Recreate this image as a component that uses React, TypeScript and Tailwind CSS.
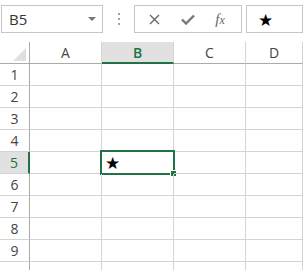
import React from "react";

const cols = ["A", "B", "C", "D"];
const rows = [1, 2, 3, 4, 5, 6, 7, 8, 9, 10];
const activeCol = "B";
const activeRow = 5;

const FormulaBar: React.FC = () => {
  return (
    <div className="flex h-[42px] items-start pl-[1px] pt-[5px]">
      {/* name box */}
      <div className="flex h-[28px] w-[102px] items-center justify-between border border-[#c6c6c6] pl-[7px] pr-[6px]">
        <span className="text-[15px] text-[#333]">B5</span>
        <svg width="8" height="4" viewBox="0 0 8 4">
          <path d="M0 0 L8 0 L4 4 Z" fill="#777" />
        </svg>
      </div>
      <div className="flex h-[28px] w-[31px] flex-col items-center justify-center gap-[3px]">
        <span className="h-[2px] w-[2px] bg-[#a0a0a0]" />
        <span className="h-[2px] w-[2px] bg-[#a0a0a0]" />
        <span className="h-[2px] w-[2px] bg-[#a0a0a0]" />
      </div>
      {/* buttons */}
      <div className="flex h-[28px] w-[108px] items-center border border-[#c6c6c6]">
        <div className="flex w-[36px] justify-center pl-[2px]">
          <svg width="11" height="11" viewBox="0 0 11 11">
            <path d="M1 1 L10 10 M10 1 L1 10" stroke="#666" strokeWidth="1.4" />
          </svg>
        </div>
        <div className="flex w-[34px] justify-center">
          <svg width="14" height="11" viewBox="0 0 14 11">
            <path d="M1 5.5 L5 9.5 L13 1.5" stroke="#777" strokeWidth="2.4" fill="none" />
          </svg>
        </div>
        <div className="flex w-[30px] justify-center">
          <span className="font-['Liberation_Serif',serif] text-[15px] italic leading-none text-[#666]">
            f<span className="text-[12px]">x</span>
          </span>
        </div>
      </div>
      <div className="w-[4px]" />
      <div className="flex h-[28px] flex-1 items-center border border-[#c6c6c6] pl-[11px]">
        <span className="text-[17px] leading-none text-black">★</span>
      </div>
    </div>
  );
};

const Grid: React.FC = () => {
  return (
    <div className="grid grid-cols-[30px_72px_72px_72px_1fr]">
      {/* corner */}
      <div className="relative h-[22px] border-b border-r border-[#ababab]">
        <svg className="absolute bottom-[2px] right-[3px]" width="13" height="13" viewBox="0 0 13 13">
          <path d="M13 0 L13 13 L0 13 Z" fill="#dfdfdf" />
        </svg>
      </div>
      {cols.map((c) => {
        const on = c === activeCol;
        return (
          <div
            key={c}
            className={
              on
                ? "flex h-[22px] items-center justify-center border-b-2 border-r border-b-[#217346] border-r-[#d4d4d4] bg-[#e1e1e1] text-[14px] font-semibold text-[#217346]"
                : "flex h-[22px] items-center justify-center border-b border-r border-b-[#ababab] border-r-[#d4d4d4] text-[14px] text-[#444]"
            }
          >
            {c}
          </div>
        );
      })}
      {rows.map((r) => (
        <React.Fragment key={r}>
          <div
            className={
              r === activeRow
                ? "flex h-[22px] items-center justify-center border-b border-r-2 border-b-[#d4d4d4] border-r-[#217346] bg-[#e1e1e1] text-[14px] text-[#217346]"
                : "flex h-[22px] items-center justify-center border-b border-r border-b-[#d4d4d4] border-r-[#ababab] text-[14px] text-[#444]"
            }
          >
            {/* row 10 sits below the window edge, leave its label off */}
            {r < 10 ? r : ""}
          </div>
          {cols.map((c) => {
            const sel = r === activeRow && c === activeCol;
            return (
              <div key={c} className="relative h-[22px] border-b border-r border-[#d4d4d4]">
                {sel && (
                  <>
                    <div className="absolute -left-[2px] -top-[2px] bottom-[-2px] right-[-2px] border-2 border-[#217346]" />
                    <span className="absolute left-[3px] top-[1px] text-[17px] leading-[20px] text-black">★</span>
                    <div className="absolute -bottom-[4px] -right-[4px] h-[7px] w-[7px] border border-white bg-[#217346]" />
                  </>
                )}
              </div>
            );
          })}
        </React.Fragment>
      ))}
    </div>
  );
};

const App: React.FC = () => {
  return (
    <div className="h-[270px] w-[303px] overflow-hidden bg-white font-['Open_Sans','Noto_Sans',sans-serif]">
      <FormulaBar />
      <Grid />
    </div>
  );
};

export default App;
